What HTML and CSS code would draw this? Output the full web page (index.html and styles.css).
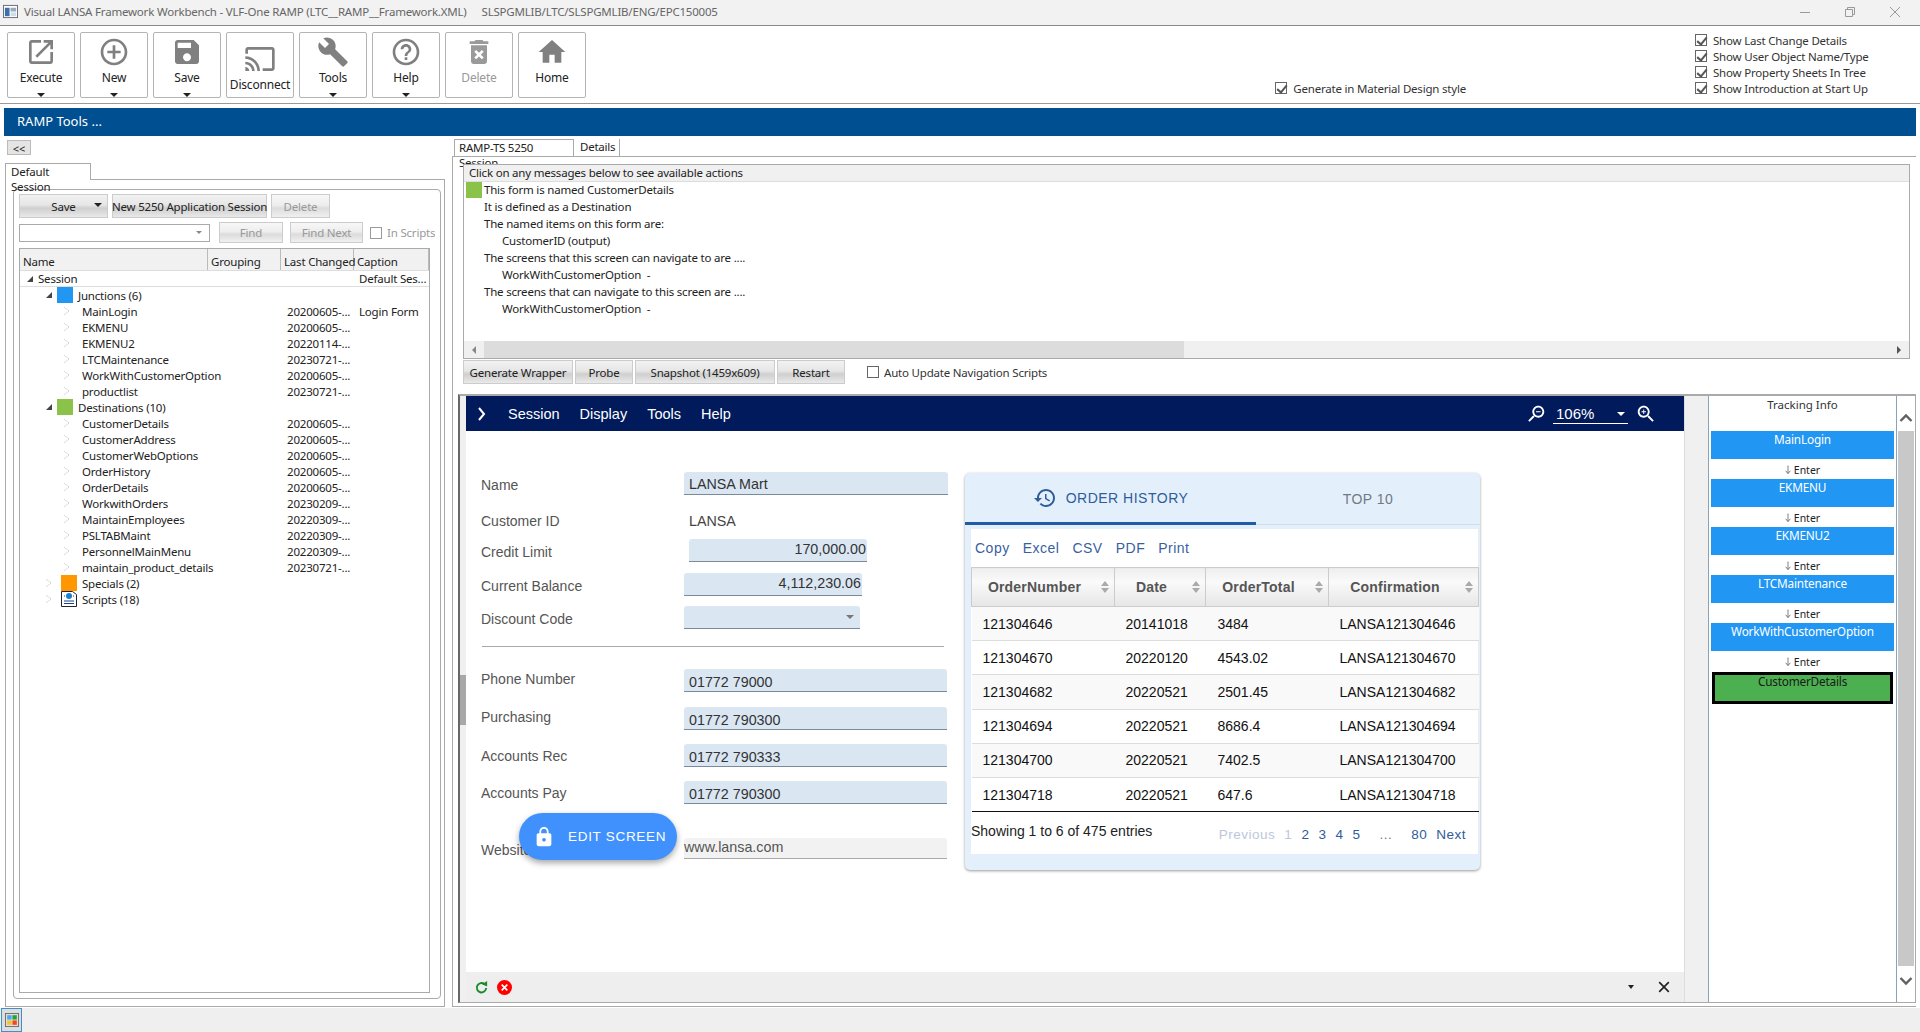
FILE: index.html
```html
<!DOCTYPE html>
<html lang="en">
<head>
    <meta charset="UTF-8">
    <title>Visual LANSA Framework Workbench - VLF-One RAMP</title>
    <link rel="stylesheet" href="styles.css">
</head>
<body>
    <!-- window title -->
    <div class="titlebar">
        <svg class="app-icon" viewBox="0 0 16 16"><rect x="0.5" y="1.5" width="15" height="13" fill="#fff" stroke="#667"/><rect x="2" y="4" width="5" height="9" fill="#3f6fa8"/><rect x="8" y="4" width="6" height="4" fill="#9ab"/><rect x="8" y="9" width="6" height="4" fill="#cde"/></svg>
        <span class="title-main">Visual LANSA Framework Workbench - VLF-One RAMP (LTC__RAMP__Framework.XML)</span>
        <span class="title-path">SLSPGMLIB/LTC/SLSPGMLIB/ENG/EPC150005</span>
        <div class="win-controls">
            <svg viewBox="0 0 10 10"><path d="M0 5.5h10" stroke="#999" fill="none"/></svg>
            <svg viewBox="0 0 10 10"><path d="M0.5 2.5h7v7h-7zM2.5 2.5V0.5h7v7h-2" stroke="#999" fill="none"/></svg>
            <svg viewBox="0 0 10 10"><path d="M0 0l10 10M10 0L0 10" stroke="#999" fill="none"/></svg>
        </div>
    </div>

    <!-- big toolbar -->
    <div class="toolbar">
        <div class="tool-btn">
            <svg class="tool-icon" viewBox="0 0 24 24"><path d="M19 19H5V5h7V3H5c-1.11 0-2 .9-2 2v14c0 1.1.89 2 2 2h14c1.1 0 2-.9 2-2v-7h-2v7zM14 3v2h3.59l-9.83 9.83 1.41 1.41L19 6.41V10h2V3h-7z"/></svg>
            <span>Execute</span><i class="caret"></i>
        </div>
        <div class="tool-btn">
            <svg class="tool-icon" viewBox="0 0 24 24"><path d="M13 7h-2v4H7v2h4v4h2v-4h4v-2h-4V7zm-1-5C6.48 2 2 6.48 2 12s4.48 10 10 10 10-4.48 10-10S17.52 2 12 2zm0 18c-4.41 0-8-3.59-8-8s3.59-8 8-8 8 3.59 8 8-3.59 8-8 8z"/></svg>
            <span>New</span><i class="caret"></i>
        </div>
        <div class="tool-btn">
            <svg class="tool-icon" viewBox="0 0 24 24"><path d="M17 3H5c-1.11 0-2 .9-2 2v14c0 1.1.89 2 2 2h14c1.1 0 2-.9 2-2V7l-4-4zm-5 16c-1.66 0-3-1.34-3-3s1.34-3 3-3 3 1.34 3 3-1.34 3-3 3zm3-10H5V5h10v4z"/></svg>
            <span>Save</span><i class="caret"></i>
        </div>
        <div class="tool-btn no-caret low">
            <svg class="tool-icon" viewBox="0 0 24 24"><path d="M21 3H3c-1.1 0-2 .9-2 2v3h2V5h18v14h-7v2h7c1.1 0 2-.9 2-2V5c0-1.1-.9-2-2-2zM1 18v3h3c0-1.66-1.34-3-3-3zm0-4v2c2.76 0 5 2.24 5 5h2c0-3.87-3.13-7-7-7zm0-4v2c4.97 0 9 4.03 9 9h2c0-6.08-4.93-11-11-11z"/></svg>
            <span>Disconnect</span>
        </div>
        <div class="tool-btn">
            <svg class="tool-icon" viewBox="0 0 24 24"><path d="M22.7 19l-9.1-9.1c.9-2.3.4-5-1.5-6.9-2-2-5-2.4-7.4-1.3L9 6 6 9 1.6 4.7C.4 7.1.9 10.1 2.9 12.1c1.9 1.9 4.6 2.4 6.9 1.5l9.1 9.1c.4.4 1 .4 1.4 0l2.3-2.3c.5-.4.5-1.1.1-1.4z"/></svg>
            <span>Tools</span><i class="caret"></i>
        </div>
        <div class="tool-btn">
            <svg class="tool-icon" viewBox="0 0 24 24"><path d="M11 18h2v-2h-2v2zm1-16C6.48 2 2 6.48 2 12s4.48 10 10 10 10-4.48 10-10S17.52 2 12 2zm0 18c-4.41 0-8-3.59-8-8s3.59-8 8-8 8 3.59 8 8-3.59 8-8 8zm0-14c-2.21 0-4 1.79-4 4h2c0-1.1.9-2 2-2s2 .9 2 2c0 2-3 1.75-3 5h2c0-2.25 3-2.5 3-5 0-2.21-1.79-4-4-4z"/></svg>
            <span>Help</span><i class="caret"></i>
        </div>
        <div class="tool-btn no-caret disabled">
            <svg class="tool-icon" viewBox="0 0 24 24"><path d="M6 19c0 1.1.9 2 2 2h8c1.1 0 2-.9 2-2V7H6v12zm2.46-7.12l1.41-1.41L12 12.59l2.12-2.12 1.41 1.41L13.41 14l2.12 2.12-1.41 1.41L12 15.41l-2.12 2.12-1.41-1.41L10.59 14l-2.13-2.12zM15.5 4l-1-1h-5l-1 1H5v2h14V4z"/></svg>
            <span>Delete</span>
        </div>
        <div class="tool-btn no-caret">
            <svg class="tool-icon" viewBox="0 0 24 24"><path d="M10 20v-6h4v6h5v-8h3L12 3 2 12h3v8z"/></svg>
            <span>Home</span>
        </div>

        <label class="check gen-check"><i class="box on"></i>Generate in Material Design style</label>
        <div class="show-opts">
            <label class="check"><i class="box on"></i>Show Last Change Details</label>
            <label class="check"><i class="box on"></i>Show User Object Name/Type</label>
            <label class="check"><i class="box on"></i>Show Property Sheets In Tree</label>
            <label class="check"><i class="box on"></i>Show Introduction at Start Up</label>
        </div>
    </div>

    <div class="ramp-bar">RAMP Tools ...</div>

    <main class="main">
        <!-- left: session tree -->
        <section class="left">
            <button class="collapse-btn">&lt;&lt;</button>
            <div class="tabs left-tabs"><div class="tab active">Default Session</div></div>
            <div class="left-pane">
                <div class="group">
                    <div class="group-row">
                        <div class="btn save-btn">Save<i class="caret"></i></div>
                        <div class="btn new-btn">New 5250 Application Session</div>
                        <div class="btn del-btn dim">Delete</div>
                    </div>
                    <div class="group-row find-row">
                        <div class="combo"><i class="caret small"></i></div>
                        <div class="btn find-btn dim">Find</div>
                        <div class="btn next-btn dim">Find Next</div>
                        <label class="check in-scripts"><i class="box"></i>In Scripts</label>
                    </div>
                    <div class="tree">
                        <div class="tree-head">
                            <div class="col-name">Name</div>
                            <div class="col-group">Grouping</div>
                            <div class="col-last">Last Changed</div>
                            <div class="col-cap">Caption</div>
                        </div>
                        <div class="tree-row root"><i class="arrow open"></i><span class="t-name">Session</span><span class="t-cap">Default Ses...</span></div>

                        <div class="tree-row lvl1"><i class="arrow open"></i><i class="swatch blue"></i><span class="t-name">Junctions (6)</span></div>
                        <div class="tree-row lvl2"><i class="arrow"></i><span class="t-name">MainLogin</span><span class="t-date">20200605-...</span><span class="t-cap">Login Form</span></div>
                        <div class="tree-row lvl2"><i class="arrow"></i><span class="t-name">EKMENU</span><span class="t-date">20200605-...</span></div>
                        <div class="tree-row lvl2"><i class="arrow"></i><span class="t-name">EKMENU2</span><span class="t-date">20220114-...</span></div>
                        <div class="tree-row lvl2"><i class="arrow"></i><span class="t-name">LTCMaintenance</span><span class="t-date">20230721-...</span></div>
                        <div class="tree-row lvl2"><i class="arrow"></i><span class="t-name">WorkWithCustomerOption</span><span class="t-date">20200605-...</span></div>
                        <div class="tree-row lvl2"><i class="arrow"></i><span class="t-name">productlist</span><span class="t-date">20230721-...</span></div>

                        <div class="tree-row lvl1"><i class="arrow open"></i><i class="swatch green"></i><span class="t-name">Destinations (10)</span></div>
                        <div class="tree-row lvl2"><i class="arrow"></i><span class="t-name">CustomerDetails</span><span class="t-date">20200605-...</span></div>
                        <div class="tree-row lvl2"><i class="arrow"></i><span class="t-name">CustomerAddress</span><span class="t-date">20200605-...</span></div>
                        <div class="tree-row lvl2"><i class="arrow"></i><span class="t-name">CustomerWebOptions</span><span class="t-date">20200605-...</span></div>
                        <div class="tree-row lvl2"><i class="arrow"></i><span class="t-name">OrderHistory</span><span class="t-date">20200605-...</span></div>
                        <div class="tree-row lvl2"><i class="arrow"></i><span class="t-name">OrderDetails</span><span class="t-date">20200605-...</span></div>
                        <div class="tree-row lvl2"><i class="arrow"></i><span class="t-name">WorkwithOrders</span><span class="t-date">20230209-...</span></div>
                        <div class="tree-row lvl2"><i class="arrow"></i><span class="t-name">MaintainEmployees</span><span class="t-date">20220309-...</span></div>
                        <div class="tree-row lvl2"><i class="arrow"></i><span class="t-name">PSLTABMaint</span><span class="t-date">20220309-...</span></div>
                        <div class="tree-row lvl2"><i class="arrow"></i><span class="t-name">PersonnelMainMenu</span><span class="t-date">20220309-...</span></div>
                        <div class="tree-row lvl2"><i class="arrow"></i><span class="t-name">maintain_product_details</span><span class="t-date">20230721-...</span></div>

                        <div class="tree-row lvl1"><i class="arrow"></i><i class="swatch orange"></i><span class="t-name">Specials (2)</span></div>
                        <div class="tree-row lvl1"><i class="arrow"></i>
                            <svg class="swatch" viewBox="0 0 16 16"><path d="M0.5 0.5h11l4 3v12h-15z" fill="#fff" stroke="#223"/><circle cx="8" cy="5" r="3" fill="#1a7fd0"/><path d="M3 5h1M12 5h1M3 10h10M3 12.500h10" stroke="#1b3f8b"/></svg>
                            <span class="t-name">Scripts (18)</span></div>
                    </div>
                </div>
            </div>
        </section>

        <!-- right: RAMP session -->
        <section class="right">
            <div class="tabs right-tabs">
                <div class="tab active">RAMP-TS 5250 Session</div>
                <div class="tab">Details</div>
            </div>
            <div class="right-pane">
                <div class="messages">
                    <div class="msg-head">Click on any messages below to see available actions</div>
                    <div class="msg-list">
                        <div class="msg"><i class="msg-flag"></i>This form is named CustomerDetails</div>
                        <div class="msg">It is defined as a Destination</div>
                        <div class="msg">The named items on this form are:</div>
                        <div class="msg sub">CustomerID (output)</div>
                        <div class="msg">The screens that this screen can navigate to are ....</div>
                        <div class="msg sub">WorkWithCustomerOption &nbsp;-</div>
                        <div class="msg">The screens that can navigate to this screen are ....</div>
                        <div class="msg sub">WorkWithCustomerOption &nbsp;-</div>
                    </div>
                    <div class="h-scroll">
                        <i class="sb-left"></i>
                        <div class="h-thumb"></div>
                        <i class="sb-right"></i>
                    </div>
                </div>
                <div class="action-row">
                    <div class="btn act-wrap">Generate Wrapper</div>
                    <div class="btn act-probe">Probe</div>
                    <div class="btn act-snap">Snapshot (1459x609)</div>
                    <div class="btn act-restart">Restart</div>
                    <label class="check auto-check"><i class="box"></i>Auto Update Navigation Scripts</label>
                </div>

                <div class="emulator">
                    <div class="emu-strip"><div class="emu-thumb"></div></div>
                    <div class="web">
                        <nav class="web-nav">
                            <svg class="nav-chevron" viewBox="0 0 10 14"><path d="M2 1l5 6-5 6" stroke="#fff" stroke-width="2" fill="none"/></svg>
                            <a>Session</a><a>Display</a><a>Tools</a><a>Help</a>
                            <div class="nav-zoom">
                                <svg class="zoom-icon flip" viewBox="0 0 24 24"><path d="M15.5 14h-.79l-.28-.27C15.41 12.590 16 11.110 16 9.500 16 5.910 13.090 3 9.500 3S3 5.910 3 9.500 5.910 16 9.500 16c1.610 0 3.090-.59 4.230-1.570l.27.28v.79l5 4.990L20.490 19l-4.990-5zm-6 0C7.010 14 5 11.990 5 9.500S7.010 5 9.500 5 14 7.010 14 9.500 11.990 14 9.500 14zM7 9h5v1.200H7z"/></svg>
                                <div class="zoom-select">106%<i class="caret white"></i></div>
                                <svg class="zoom-icon" viewBox="0 0 24 24"><path d="M15.5 14h-.79l-.28-.27C15.41 12.590 16 11.110 16 9.500 16 5.910 13.090 3 9.500 3S3 5.910 3 9.500 5.910 16 9.500 16c1.610 0 3.090-.59 4.230-1.570l.27.28v.79l5 4.990L20.490 19l-4.990-5zm-6 0C7.010 14 5 11.990 5 9.500S7.010 5 9.500 5 14 7.010 14 9.500 11.990 14 9.500 14zM12 10h-2v2H9v-2H7V9h2V7h1v2h2v1z"/></svg>
                            </div>
                        </nav>
                        <div class="web-body">
                            <div class="form">
                                <div class="f-row r-name"><label>Name</label><div class="field">LANSA Mart</div></div>
                                <div class="f-row r-cust"><label>Customer ID</label><div class="plain">LANSA</div></div>
                                <div class="f-row r-credit"><label>Credit Limit</label><div class="field num f-credit">170,000.00</div></div>
                                <div class="f-row r-bal"><label>Current Balance</label><div class="field num f-bal">4,112,230.06</div></div>
                                <div class="f-row r-disc"><label>Discount Code</label><div class="field f-disc"><i class="caret gray"></i></div></div>
                                <hr class="f-line">
                                <div class="f-row r-phone"><label>Phone Number</label><div class="field f-wide">01772 79000</div></div>
                                <div class="f-row r-purch"><label>Purchasing</label><div class="field f-wide">01772 790300</div></div>
                                <div class="f-row r-rec"><label>Accounts Rec</label><div class="field f-wide">01772 790333</div></div>
                                <div class="f-row r-pay"><label>Accounts Pay</label><div class="field f-wide">01772 790300</div></div>
                                <div class="f-row r-web"><label>Website</label><div class="field f-wide f-ro">www.lansa.com</div></div>
                                <div class="fab">
                                    <svg viewBox="0 0 24 24"><path d="M18 8h-1V6c0-2.760-2.240-5-5-5S7 3.240 7 6v2H6c-1.100 0-2 .9-2 2v10c0 1.100.9 2 2 2h12c1.100 0 2-.9 2-2V10c0-1.100-.9-2-2-2zm-6 9c-1.100 0-2-.9-2-2s.9-2 2-2 2 .9 2 2-.9 2-2 2zm3.100-9H8.900V6c0-1.710 1.390-3.100 3.100-3.100 1.710 0 3.100 1.390 3.100 3.100v2z"/></svg>
                                    EDIT SCREEN
                                </div>
                            </div>

                            <div class="card">
                                <div class="card-tabs">
                                    <div class="card-tab active">
                                        <svg viewBox="0 0 24 24"><path d="M13 3c-4.970 0-9 4.030-9 9H1l3.890 3.890.07.14L9 12H6c0-3.870 3.130-7 7-7s7 3.130 7 7-3.130 7-7 7c-1.930 0-3.680-.79-4.940-2.060l-1.420 1.420C8.270 19.990 10.510 21 13 21c4.970 0 9-4.030 9-9s-4.030-9-9-9zm-1 5v5l4.280 2.540.72-1.210-3.500-2.080V8H12z"/></svg>
                                        ORDER HISTORY
                                    </div>
                                    <div class="card-tab">TOP 10</div>
                                </div>
                                <div class="card-inner">
                                    <div class="dt-buttons"><a>Copy</a><a>Excel</a><a>CSV</a><a>PDF</a><a>Print</a></div>
                                    <table class="orders">
                                        <colgroup><col class="c1"><col class="c2"><col class="c3"><col class="c4"></colgroup>
                                        <thead>
                                            <tr>
                                                <th>OrderNumber<i class="sort"></i></th>
                                                <th>Date<i class="sort"></i></th>
                                                <th>OrderTotal<i class="sort"></i></th>
                                                <th>Confirmation<i class="sort"></i></th>
                                            </tr>
                                        </thead>
                                        <tbody>
                                            <tr><td>121304646</td><td>20141018</td><td>3484</td><td>LANSA121304646</td></tr>
                                            <tr><td>121304670</td><td>20220120</td><td>4543.02</td><td>LANSA121304670</td></tr>
                                            <tr><td>121304682</td><td>20220521</td><td>2501.45</td><td>LANSA121304682</td></tr>
                                            <tr><td>121304694</td><td>20220521</td><td>8686.4</td><td>LANSA121304694</td></tr>
                                            <tr><td>121304700</td><td>20220521</td><td>7402.5</td><td>LANSA121304700</td></tr>
                                            <tr><td>121304718</td><td>20220521</td><td>647.6</td><td>LANSA121304718</td></tr>
                                        </tbody>
                                    </table>
                                    <div class="dt-foot">
                                        <div class="dt-info">Showing 1 to 6 of 475 entries</div>
                                        <div class="dt-pages">
                                            <a class="off">Previous</a><a class="off">1</a><a>2</a><a>3</a><a>4</a><a>5</a><a class="gap">...</a><a>80</a><a>Next</a>
                                        </div>
                                    </div>
                                </div>
                            </div>
                        </div>
                        <div class="web-foot">
                            <svg class="foot-icon" viewBox="0 0 16 16"><path d="M13 8.500a5 5 0 1 1-1.700-4" stroke="#1a8a2a" stroke-width="2" fill="none"/><path d="M8.500 4.500L14 1v6z" fill="#1a8a2a"/></svg>
                            <svg class="foot-icon" viewBox="0 0 16 16"><circle cx="8" cy="8" r="8" fill="#f00"/><path d="M5 5l6 6M11 5l-6 6" stroke="#fff" stroke-width="1.800"/></svg>
                            <i class="caret dark"></i>
                            <svg class="foot-x" viewBox="0 0 10 10"><path d="M1 1l8 8M9 1l-8 8" stroke="#222" stroke-width="1.400"/></svg>
                        </div>
                    </div>
                    <div class="track-gap"></div>
                    <aside class="tracking">
                        <div class="track-title">Tracking Info</div>
                        <div class="track-box">MainLogin</div>
                        <div class="track-key"><svg viewBox="0 0 8 12"><path d="M4 0v10M1 7l3 4 3-4" stroke="#555" fill="none"/></svg>Enter</div>
                        <div class="track-box">EKMENU</div>
                        <div class="track-key"><svg viewBox="0 0 8 12"><path d="M4 0v10M1 7l3 4 3-4" stroke="#555" fill="none"/></svg>Enter</div>
                        <div class="track-box">EKMENU2</div>
                        <div class="track-key"><svg viewBox="0 0 8 12"><path d="M4 0v10M1 7l3 4 3-4" stroke="#555" fill="none"/></svg>Enter</div>
                        <div class="track-box">LTCMaintenance</div>
                        <div class="track-key"><svg viewBox="0 0 8 12"><path d="M4 0v10M1 7l3 4 3-4" stroke="#555" fill="none"/></svg>Enter</div>
                        <div class="track-box">WorkWithCustomerOption</div>
                        <div class="track-key"><svg viewBox="0 0 8 12"><path d="M4 0v10M1 7l3 4 3-4" stroke="#555" fill="none"/></svg>Enter</div>
                        <div class="track-box current">CustomerDetails</div>
                    </aside>
                    <div class="v-scroll">
                        <svg viewBox="0 0 14 10"><path d="M1.500 8L7 2.500 12.500 8" stroke="#606060" stroke-width="2.400" fill="none"/></svg>
                        <div class="v-thumb"></div>
                        <svg viewBox="0 0 14 10"><path d="M1.500 2L7 7.500 12.500 2" stroke="#606060" stroke-width="2.400" fill="none"/></svg>
                    </div>
                </div>
            </div>
        </section>
    </main>

    <footer class="statusbar">
        <div class="status-btn">
            <svg viewBox="0 0 16 16"><rect x="0.500" y="0.500" width="15" height="15" fill="#ddd" stroke="#666"/><rect x="2.500" y="2.500" width="5" height="5" fill="#4aa8ee"/><rect x="8.500" y="2.500" width="5" height="5" fill="#22a33a"/><rect x="2.500" y="8.500" width="5" height="5" fill="#f4c430"/><rect x="8.500" y="8.500" width="5" height="5" fill="#f24a12"/></svg>
        </div>
    </footer>
</body>
</html>
```

FILE: styles.css
```css
* {
    margin: 0;
    padding: 0;
    box-sizing: border-box;
}
html, body { width: 1920px; height: 1032px; overflow: hidden; }
body {
    display: flex;
    flex-direction: column;
    background: #fff;
    color: #222;
    font-family: "Noto Sans", sans-serif;
    font-size: 11.5px;
    letter-spacing: -0.2px;
}
i { display: block; font-style: normal; }

/* title bar */
.titlebar { height: 26px; background: #f2f2f2; border-bottom: 1px solid #8a8a8a; display: flex; align-items: center; padding: 0 0 2px 3px; color: #666; flex: none; }
.app-icon { width: 15px; height: 15px; margin-right: 6px; }
.title-main { margin-right: 15px; }
.win-controls { margin-left: auto; display: flex; gap: 35px; margin-right: 20px; }
.win-controls svg { width: 10px; height: 10px; }

/* toolbar */
.toolbar { height: 78px; flex: none; display: flex; gap: 5px; padding: 6px 0 0 7px; border-bottom: 1px solid #9a9a9a; position: relative; }
.tool-btn { width: 68px; height: 66px; border: 1px solid #b4b4b4; border-radius: 2px; display: flex; flex-direction: column; align-items: center; padding-top: 3px; background: #fff; font-size: 12px; color: #222; }
.tool-icon { width: 32px; height: 32px; fill: #808080; margin-bottom: 1px; }
.tool-btn .caret { margin-top: 7px; }
.tool-btn.low { padding-top: 10px; }
.tool-btn.disabled { color: #999; }
.tool-btn.disabled .tool-icon { fill: #9a9a9a; }
.caret { width: 0; height: 0; border-left: 4px solid transparent; border-right: 4px solid transparent; border-top: 4px solid #222; }
.caret.small { border-left-width: 3px; border-right-width: 3px; border-top: 3px solid #888; }
.caret.white { border-top-color: #fff; }
.caret.gray { border-top-color: #777; }
.caret.dark { border-top-color: #222; border-left-width: 3px; border-right-width: 3px; }

.check { display: flex; align-items: center; gap: 6px; height: 16px; color: #333; white-space: nowrap; }
.box { width: 12px; height: 12px; border: 1px solid #666; background: #fff; position: relative; flex: none; }
.box.on::after { content: ""; position: absolute; left: 3px; top: 0; width: 4px; height: 8px; border: solid #555; border-width: 0 2px 2px 0; transform: rotate(40deg); }
.gen-check { margin: 48px 0 0 auto; }
.show-opts { margin: 0 35px 0 224px; width: 190px; }

.ramp-bar { flex: none; height: 28px; margin: 4px 4px 0; background: #004f91; color: #fff; font-size: 13px; line-height: 26px; padding-left: 13px; letter-spacing: 0; }

/* main split */
.main { flex: 1; display: flex; min-height: 0; }
.left { width: 446px; padding-left: 5px; display: flex; flex-direction: column; flex: none; }
.right { flex: 1; margin-left: 6px; margin-right: 4px; display: flex; flex-direction: column; }

.tabs { display: flex; flex: none; }
.tab { height: 17px; line-height: 15px; padding: 0 5px; border-right: 1px solid #aaa; color: #222; }
.tab.active { border: 1px solid #aaa; border-bottom: none; background: #fff; }

.collapse-btn { width: 24px; height: 15px; margin: 4px 0 0 2px; border: 1px solid #bbb; background: #e4e4e4; font: 11px "Noto Sans", sans-serif; color: #222; flex: none; }
.left-tabs { margin-top: 7px; position: relative; top: 1px; }
.left-tabs .tab { width: 86px; }
.left-pane { flex: 1; margin-bottom: 1px; border: 1px solid #aaa; padding: 9px 7px 7px; display: flex; width: 440px; }
.group { flex: 1; border: 1px solid #aaa; border-radius: 4px; padding: 4px 5px 5px; display: flex; flex-direction: column; }
.group-row { display: flex; gap: 4px; height: 24px; flex: none; }
.btn { height: 24px; display: flex; align-items: center; justify-content: center; border: 1px solid #ccc; color: #222; background: linear-gradient(#f2f2f2, #e6e6e6 45%, #cfcfcf 60%, #e9e9e9); white-space: nowrap; flex: none; position: relative; }
.btn.dim { color: #999; background: linear-gradient(#f7f7f7, #eee 45%, #dcdcdc 60%, #f0f0f0); }
.save-btn { width: 89px; }
.save-btn .caret { position: absolute; right: 5px; top: 8px; }
.new-btn { width: 155px; }
.del-btn { width: 59px; }
.find-row { margin-top: 4px; height: 21px; gap: 9px; align-items: center; margin-bottom: 5px; }
.combo { width: 191px; height: 18px; border: 1px solid #aaa; display: flex; align-items: center; justify-content: flex-end; padding-right: 7px; }
.find-btn { width: 64px; height: 21px; margin-left: 0; }
.next-btn { width: 73px; height: 21px; margin-left: -2px; }
.in-scripts { color: #999; width: 65px; overflow: hidden; gap: 5px; margin-left: -2px; }
.in-scripts .box { border-color: #999; }

/* tree */
.tree { flex: 1; border: 1px solid #aaa; margin-left: 0; width: 411px; }
.tree-head { display: flex; height: 22px; background: #f1f1f1; border-bottom: 1px solid #ddd; }
.tree-head div { border-right: 1px solid #bbb; padding: 5px 0 0 3px; }
.col-name { width: 188px; }
.col-group { width: 73px; }
.col-last { width: 73px; white-space: nowrap; }
.col-cap { flex: 1; }
.tree-row { display: flex; align-items: center; height: 16px; position: relative; white-space: nowrap; }
.tree-row.root { border: 1px solid #ddd; border-width: 0 0 1px; margin-right: 0; height: 16px; padding-left: 7px; }
.tree-row.lvl1 { padding-left: 26px; }
.tree-row.lvl2 { padding-left: 44px; }
.arrow { width: 0; height: 0; border: 4px solid transparent; border-left: 5px solid #fff; filter: drop-shadow(0 0 0.6px #555); margin-right: 6px; flex: none; }
.arrow.open { border: 3px solid transparent; border-right-color: #444; border-bottom-color: #444; filter: none; margin-right: 5px; }
.root .t-name { margin-left: 0; }
.lvl1 .t-name { margin-left: 5px; }
.lvl2 .t-name { margin-left: 3px; }
.swatch { width: 16px; height: 16px; flex: none; margin-left: 0; }
.swatch.blue { background: #2196f3; }
.swatch.green { background: #8bc34a; }
.swatch.orange { background: #ff9800; }
.t-date { position: absolute; left: 267px; }
.t-cap { position: absolute; left: 339px; }

/* right pane */
.right-tabs { margin-top: 3px; border-bottom: 1px solid #aaa; padding-left: 2px; height: 18px; }
.right-tabs .tab { padding: 0 6px; letter-spacing: -0.25px; }
.right-tabs .tab.active { width: 120px; padding: 0 4px; }
.right-tabs .tab:not(.active) { width: 46px; padding: 0 6px; }
.right-pane { flex: 1; border: 1px solid #aaa; border-width: 0 0 1px 1px; margin-bottom: 1px; display: flex; flex-direction: column; padding: 7px 0 3px 5px; }
.messages { height: 195px; margin-left: 5px; margin-right: 6px; border: 1px solid #aaa; display: flex; flex-direction: column; flex: none; }
.msg-head { height: 17px; background: #f0f0f0; line-height: 15px; padding-left: 5px; border-bottom: 1px solid #ddd; flex: none; }
.msg-list { flex: 1; }
.msg { height: 17px; line-height: 16px; padding-left: 20px; position: relative; }
.msg.sub { padding-left: 38px; }
.msg-flag { position: absolute; left: 2px; top: 0; width: 16px; height: 16px; background: #8bc34a; }
.h-scroll { height: 17px; background: #f0f0f0; display: flex; align-items: center; flex: none; }
.sb-left { width: 0; height: 0; border: 4px solid transparent; border-right: 4px solid #888; margin: 0 8px 0 4px; }
.sb-right { width: 0; height: 0; border: 4px solid transparent; border-left: 4px solid #555; margin-left: auto; margin-right: 4px; }
.h-thumb { width: 700px; height: 17px; background: #dcdcdc; margin-left: 0; }
.action-row { display: flex; gap: 2px; height: 24px; margin: 1px 0 0 5px; flex: none; }
.action-row .btn { height: 24px; }
.act-wrap { width: 110px; }
.act-probe { width: 58px; }
.act-snap { width: 140px; }
.act-restart { width: 68px; }
.auto-check { margin-left: 20px; height: 24px; gap: 5px; }

/* emulator frame */
.emulator { flex: 1; min-height: 0; margin-top: 10px; border-top: 2px solid #aaa; border-bottom: 1px solid #aaa; border-right: 1px solid #aaa; border-left: 2px solid #666; display: flex; }
.emu-strip { width: 6px; background: #f0f0f0; flex: none; padding-top: 279px; }
.emu-thumb { height: 50px; background: #a8a8a8; }
.web { width: 1218px; flex: none; display: flex; flex-direction: column; font-family: "Liberation Sans", sans-serif; font-size: 14px; letter-spacing: 0; position: relative; }
.web-nav { height: 35px; background: #001a5b; color: #fff; display: flex; align-items: center; flex: none; }
.nav-chevron { width: 10px; height: 14px; margin-left: 11px; margin-right: 21px; }
.web-nav a { margin-right: 20px; font-size: 14.5px; }
.nav-zoom { margin-left: auto; margin-right: 27px; display: flex; align-items: center; }
.zoom-icon { width: 22px; height: 22px; fill: #fff; }
.zoom-icon.flip { transform: scaleX(-1); margin-right: 6px; }
.zoom-select { width: 75px; height: 20px; border-bottom: 1px solid #fff; padding-left: 3px; font-size: 15px; line-height: 20px; position: relative; margin-right: 7px; }
.zoom-select .caret { position: absolute; right: 3px; top: 8px; }

.web-body { flex: 1; display: flex; background: #fff; min-height: 0; }
.form { width: 483px; padding: 41px 0 0 15px; flex: none; position: relative; color: #444; }
.f-row { display: flex; align-items: center; height: 23px; }
.f-row label { width: 203px; flex: none; font-size: 14px; color: #555; padding-top: 3px; }
.field { height: 23px; width: 264px; background: #dae7f3; border-bottom: 1px solid #7a8a98; border-radius: 3px 3px 0 0; color: #333; padding: 3px 0 0 5px; line-height: 19px; font-size: 14.3px; }
.plain { padding-left: 5px; font-size: 14.300px; color: #444; padding-top: 3px; }
.num { text-align: right; padding: 1px 1px 0 0; }
.r-cust { margin-top: 13px; }
.r-credit { margin-top: 8px; }
.f-credit { width: 178px; margin-left: 5px; }
.r-bal { margin-top: 11px; }
.f-bal { width: 178px; }
.r-disc { margin-top: 10px; }
.f-disc { width: 176px; position: relative; }
.f-disc .caret { position: absolute; right: 6px; top: 9px; }
.f-line { width: 462px; margin: 17px 0 22px 1px; border: none; border-top: 1px solid #aaa; }
.f-wide { width: 263px; padding-top: 4px; }
.r-phone label { padding: 0 0 3px; }
.r-purch { margin-top: 15px; }
.r-purch label { padding: 0 0 3px; }
.r-rec { margin-top: 14px; }
.r-pay { margin-top: 14px; }
.r-rec label, .r-pay label { padding: 0; }
.r-web { margin-top: 34px; height: 21px; }
.f-ro { background: #f2f2f2; border-bottom-color: #aaa; height: 21px; padding: 0; color: #555; }

.fab { position: absolute; left: 53px; top: 382px; width: 158px; height: 47px; border-radius: 24px; background: #4091fe; color: #fff; font-size: 13.500px; letter-spacing: 0.7px; display: flex; align-items: center; box-shadow: 0 3px 6px rgba(0, 0, 0, 0.35); padding-left: 14px; }
.fab svg { width: 22px; height: 22px; fill: #fff; margin-right: 13px; }

/* order card */
.card { width: 515px; height: 397px; margin: 42px 0 0 16px; background: #e3f0fb; border-radius: 5px; box-shadow: 0 1px 3px rgba(0, 0, 0, 0.4); display: flex; flex-direction: column; flex: none; }
.card-tabs { height: 52px; display: flex; border-bottom: 1px solid #d3dde6; flex: none; }
.card-tab { display: flex; align-items: center; justify-content: center; color: #6f7a84; font-size: 14px; letter-spacing: 0.5px; flex: 1; }
.card-tab.active { width: 291px; flex: none; border-bottom: 3px solid #1f5ba6; margin-bottom: -1px; color: #2f5c9a; }
.card-tab svg { width: 24px; height: 24px; fill: #2f5c9a; margin-right: 9px; }
.card-inner { margin: 4px 2px 0 6px; height: 325px; background: #fff; flex: none; }
.dt-buttons { height: 38px; display: flex; align-items: center; gap: 13px; padding-left: 4px; color: #3a5fa0; letter-spacing: 0.5px; font-size: 14px; }
.orders { width: 507px; border-collapse: collapse; table-layout: fixed; font-size: 14px; color: #111; }
.c1 { width: 143px; }
.c2 { width: 91px; }
.c3 { width: 123px; }
.c4 { width: 150px; }
.orders th { height: 39px; border: 1px solid #ccc; background: linear-gradient(#eee, #fafafa 35%, #e6e6e6); color: #555; font-size: 14px; position: relative; padding-right: 17px; letter-spacing: 0.2px; }
.sort { position: absolute; right: 5px; top: 13px; width: 0; height: 0; border: 4px solid transparent; border-bottom: 5px solid #aaa; border-top: none; }
.sort::after { content: ""; position: absolute; left: -4px; top: 7px; border: 4px solid transparent; border-top: 5px solid #aaa; border-bottom: none; }
.orders td { height: 34.200px; padding: 0 0 0 11px; border-bottom: 1px solid #ddd; white-space: nowrap; }
.orders td:nth-child(3) { padding-left: 12px; }
.orders tbody tr:nth-child(odd) { background: #f9f9f9; }
.orders tbody tr:last-child td { border-bottom: 1px solid #111; }
.dt-foot { display: flex; justify-content: space-between; }
.dt-info { padding-top: 11px; color: #222; font-size: 14px; }
.dt-pages { padding: 15px 12px 0 0; display: flex; gap: 9px; color: #2f5c9a; letter-spacing: 0.5px; font-size: 13.500px; }
.dt-pages .off { color: #bcc8da; }
.dt-pages .gap { margin: 0 10px 0 10px; color: #777; }

.web-foot { height: 30px; background: #eee; display: flex; align-items: center; padding-left: 8px; gap: 8px; flex: none; }
.foot-icon { width: 15px; height: 15px; }
.web-foot .caret { margin-left: auto; margin-right: 16px; }
.foot-x { width: 12px; height: 12px; margin-right: 14px; }

/* tracking */
.track-gap { width: 24px; background: #f0f0f0; border-left: 1px solid #ddd; flex: none; }
.tracking { width: 189px; border: 1px solid #89a3bc; border-width: 0 1px; background: #fff; flex: none; padding: 0 2px; display: flex; flex-direction: column; align-items: stretch; text-align: center; }
.track-title { height: 35px; padding-top: 1px; color: #333; letter-spacing: 0; }
.track-box { height: 28px; background: #2196f3; color: #fff; font-size: 11.800px; line-height: 17px; flex: none; }
.track-key { height: 20px; font-size: 10.500px; line-height: 22px; color: #222; display: flex; justify-content: center; align-items: center; gap: 3px; letter-spacing: 0; padding-top: 2px; }
.track-key svg { width: 6px; height: 10px; }
.track-box.current { height: 32px; margin: 1px 1px 0; background: #4caf50; border: 3px solid #000; color: #1a1a1a; line-height: 12px; }
.v-scroll { flex: 1; display: flex; flex-direction: column; align-items: center; padding: 17px 1px 0; background: #fff; }
.v-scroll svg { width: 14px; height: 10px; flex: none; }
.v-thumb { width: 100%; height: 535px; background: #c8c8c8; margin: 8px 0 10px; }

.statusbar { flex: none; height: 24px; background: #efefef; }
.status-btn { width: 21px; height: 24px; border: 1px solid #3f8fc9; background: #ddd; margin-left: 1px; display: flex; align-items: center; justify-content: center; }
.status-btn svg { width: 14px; height: 14px; }
```
